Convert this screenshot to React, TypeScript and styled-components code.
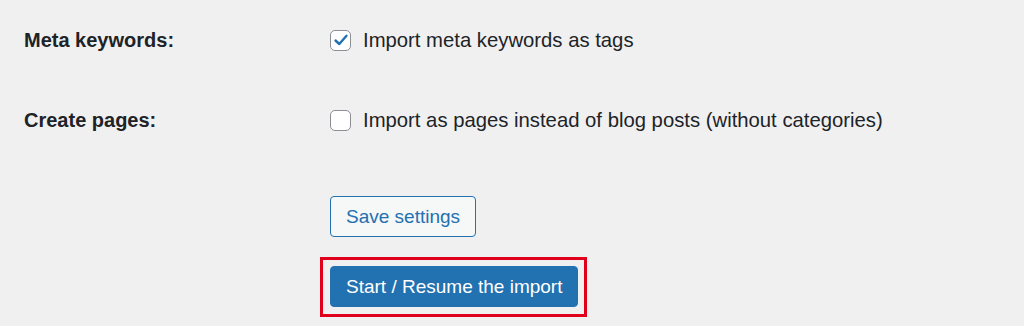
import React from "react";
import styled, { createGlobalStyle } from "styled-components";

const GlobalStyle = createGlobalStyle`
  html, body {
    margin: 0;
    padding: 0;
    background: #f0f0f1;
  }
  body {
    font-family: "Liberation Sans", Arial, sans-serif;
    color: #1d2327;
  }
`;

const Page = styled.div`
  width: 1024px;
  height: 326px;
  overflow: hidden;
  padding-left: 24px;
  box-sizing: border-box;
`;

const FormTable = styled.div`
  display: grid;
  grid-template-columns: 306px 1fr;
  grid-auto-rows: 80px;
`;

const Label = styled.div`
  display: flex;
  align-items: center;
  font-size: 20px;
  font-weight: 700;
`;

const Field = styled.label`
  display: flex;
  align-items: center;
  gap: 12px;
  font-size: 20.3px;
  cursor: pointer;
`;

const Box = styled.span<{ $checked?: boolean }>`
  width: 21px;
  height: 21px;
  box-sizing: border-box;
  border: 1.5px solid #8c8f94;
  border-radius: 5px;
  background: #fff;
  display: flex;
  align-items: center;
  justify-content: center;
  flex-shrink: 0;
  svg {
    display: ${(p) => (p.$checked ? "block" : "none")};
  }
`;

const Submit = styled.div`
  display: flex;
  flex-direction: column;
  align-items: flex-start;
  padding-left: 306px;
  padding-top: 36px;
  gap: 20px;
`;

const Button = styled.button<{ $primary?: boolean }>`
  height: 41px;
  padding: 0 15px;
  box-sizing: border-box;
  border-radius: 4px;
  font-family: "Liberation Sans", Arial, sans-serif;
  font-size: 19px;
  border: 1.5px solid #2271b1;
  background: ${(p) => (p.$primary ? "#2271b1" : "#f6f7f7")};
  color: ${(p) => (p.$primary ? "#fff" : "#2271b1")};
  cursor: pointer;
`;

const Highlight = styled.div`
  margin-left: -10px;
  border: 3px solid #e0001b;
  padding: 6px 6px 7px 7px;
`;

function Check({ checked, children }: { checked?: boolean; children: React.ReactNode }) {
  return (
    <Field>
      <Box $checked={checked}>
        <svg width="16" height="16" viewBox="0 0 16 16">
          <path d="M2.5 8.5 L6.3 12 L13.5 3.8" fill="none" stroke="#2271b1" strokeWidth="2.4" strokeLinecap="round" strokeLinejoin="round" />
        </svg>
      </Box>
      {children}
    </Field>
  );
}

export default function App() {
  return (
    <>
      <GlobalStyle />
      <Page>
        <FormTable>
          <Label>Meta keywords:</Label>
          <Check checked>Import meta keywords as tags</Check>
          <Label>Create pages:</Label>
          <Check>Import as pages instead of blog posts (without categories)</Check>
        </FormTable>
        <Submit>
          <Button>Save settings</Button>
          <Highlight>
            <Button $primary>Start / Resume the import</Button>
          </Highlight>
        </Submit>
      </Page>
    </>
  );
}
